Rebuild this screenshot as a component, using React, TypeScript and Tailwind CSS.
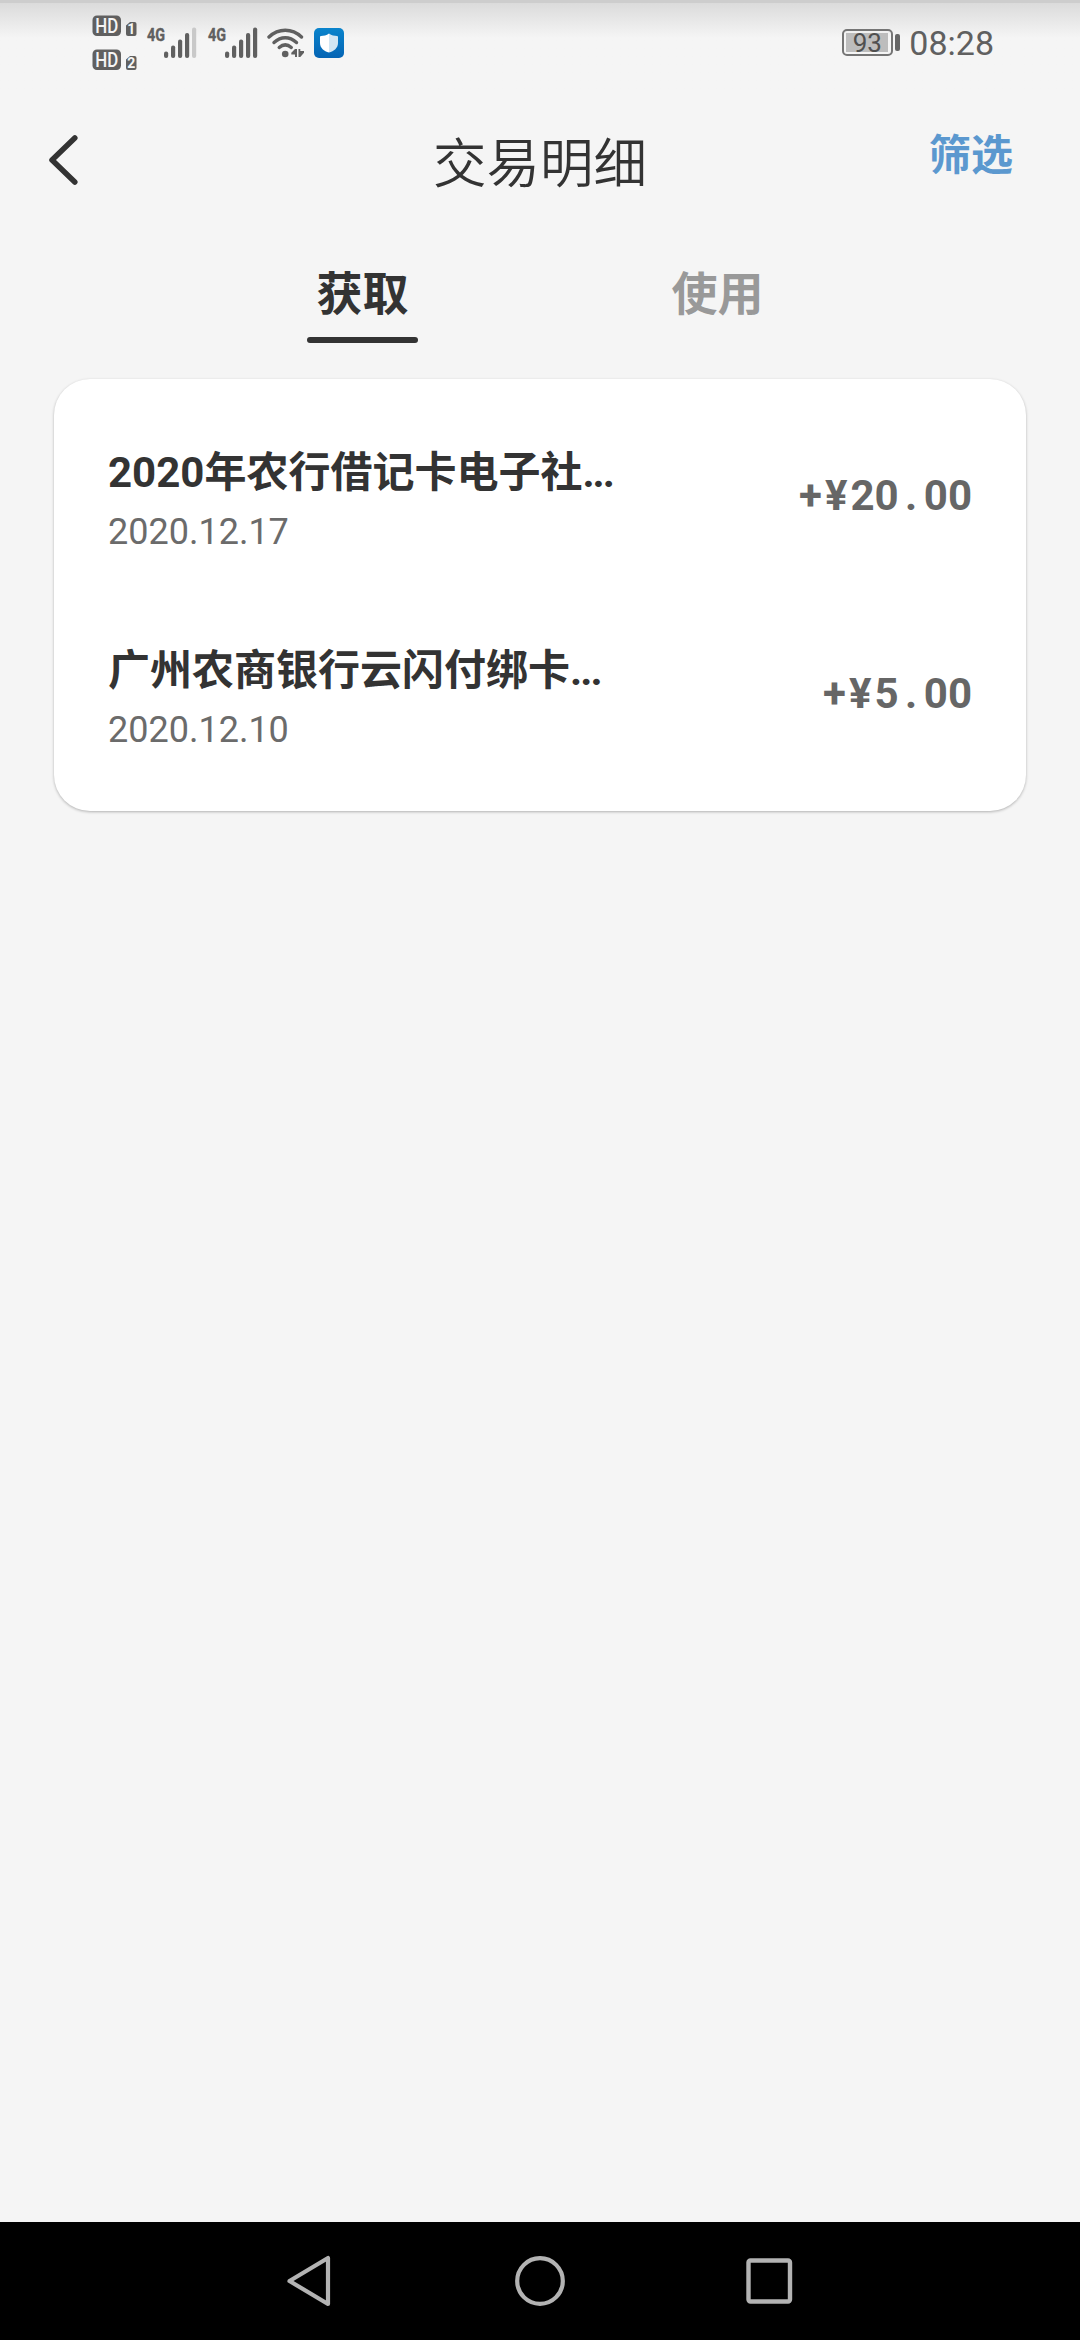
interface Transaction {
  id: string
  title: string
  date: string
  whole: string
  cents: string
}

const TRANSACTIONS: Transaction[] = [
  { id: "1", title: "2020年农行借记卡电子社", date: "2020.12.17", whole: "20", cents: "00" },
  { id: "2", title: "广州农商银行云闪付绑卡", date: "2020.12.10", whole: "5", cents: "00" },
]

function HdBadge({ sim }: { sim: string }) {
  return (
    <svg width="46" height="22" viewBox="0 0 46 22" className="block">
      <rect x="0.5" y="0.5" width="28.5" height="20.5" rx="4.5" fill="#606060" />
      <text x="3.2" y="17.8" fontSize="19.5" fontWeight="500" fill="#f5f5f5" textLength="23" lengthAdjust="spacingAndGlyphs">HD</text>
      <path d="M38 7h4.5a2 2 0 0 1 2 2v10a2 2 0 0 1-2 2H36a2 2 0 0 1-2-2V10.500z" fill="#606060" />
      <text x="39.200" y="19.200" textAnchor="middle" fontSize="14" fontWeight="700" fill="#f5f5f5">{sim}</text>
    </svg>
  )
}

function Signal({ level }: { level: number }) {
  const bars = [
    { x: 17, y: 24 },
    { x: 24, y: 18 },
    { x: 31, y: 12 },
    { x: 38, y: 5.5 },
    { x: 45, y: 0 },
  ]
  return (
    <svg width="50" height="31" viewBox="0 0 50 31" className="block overflow-visible">
      <text x="0" y="13.800" fontSize="19" fontWeight="700" fill="#606060" stroke="#606060" strokeWidth="0.400" textLength="18" lengthAdjust="spacingAndGlyphs">4G</text>
      {bars.map((b, i) => (
        <rect key={b.x} x={b.x} y={b.y + 0.5} width="4.200" height={30.5 - b.y} rx="2" fill={i < level ? "#606060" : "#c9c9c9"} />
      ))}
    </svg>
  )
}

function Wifi() {
  return (
    <svg width="38" height="31" viewBox="0 0 38 31" fill="none" stroke="#606060" strokeWidth="3.400" strokeLinecap="round" className="block">
      <path d="M2 10C11.500 1 25 1 34.500 10" />
      <path d="M7 15.500C14 9.200 22.500 9.200 29.500 15.500" />
      <path d="M12.200 20.500C16 17.200 20.500 17.200 24.300 20.500" />
      <circle cx="18.200" cy="27" r="3.300" fill="#606060" stroke="none" />
      <path d="M30 22v8h-2v-2.500h-3.700v-1.700l3.700-3.800zM31.500 22h1.800v2h3.700v1.700l-3.700 4.300h-1.800z" fill="#606060" stroke="none" />
    </svg>
  )
}

function Shield() {
  return (
    <svg width="30" height="30" viewBox="0 0 30 30" className="block">
      <defs>
        <linearGradient id="shieldBg" x1="0" y1="0" x2="0" y2="1">
          <stop offset="0" stopColor="#0a84cc" />
          <stop offset="1" stopColor="#0564b4" />
        </linearGradient>
      </defs>
      <rect width="30" height="30" rx="5" fill="url(#shieldBg)" />
      <path d="M15 5.500C12.500 7.300 9.500 8 7 8q-1 0-1 1v6c0 5 4 8.200 9 9.600z" fill="#fff" />
      <path d="M15 5.500c2.500 1.800 5.500 2.500 8 2.500q1 0 1 1v6c0 5-4 8.200-9 9.600z" fill="#d3e6f3" />
    </svg>
  )
}

function StatusBar() {
  return (
    <div className="h-[90px] shrink-0 border-t-[3px] border-[#cdcdcd] bg-linear-to-b from-[#dbdbdb] to-[#f5f5f5] to-[35px] pl-[92px] pr-[86px] flex items-start justify-between">
      <div className="flex items-start">
        <div className="flex flex-col gap-[12px] pt-[12px]">
          <HdBadge sim="1" />
          <HdBadge sim="2" />
        </div>
        <div className="flex items-start pt-[24px]">
          <div className="ml-[9px]"><Signal level={4} /></div>
          <div className="ml-[11px]"><Signal level={5} /></div>
          <div className="ml-[9px]"><Wifi /></div>
          <div className="ml-[9px] mt-px"><Shield /></div>
        </div>
      </div>
      <div className="flex items-start pt-[25px]">
        <div className="mt-px w-[51px] h-[27px] rounded-[5px] border-2 border-[#757575] p-[2px]">
          <div className="h-full w-[42px] bg-[#bdbdbd] flex items-center justify-center text-[26px] leading-none text-[#505050]">93</div>
        </div>
        <div className="ml-[2px] mt-[6px] w-[5px] h-[17px] rounded-[2px] bg-[#666666]" />
        <span className="ml-[9px] -mt-[5px] text-[34px] leading-[40px] text-[#606060]">08:28</span>
      </div>
    </div>
  )
}

function Header() {
  return (
    <header className="h-[140px] shrink-0 grid grid-cols-[1fr_auto_1fr] items-start text-[#333333]">
      <button className="ml-[46px] mt-[43px] w-[34px]">
        <svg width="34" height="54" viewBox="0 0 34 54" fill="none" stroke="#333333" strokeWidth="5.500" strokeLinecap="round" strokeLinejoin="round">
          <path d="M28.800 5L6 27l22.800 22" />
        </svg>
      </button>
      <h1 className="mt-[45px] text-[53.5px] leading-[60px] font-[350]">交易明细</h1>
      <button className="justify-self-end mr-[67px] mt-[36px] text-[42px] leading-[60px] font-bold text-[#5b98cf]">筛选</button>
    </header>
  )
}

function Tabs() {
  return (
    <div className="h-[148px] shrink-0 flex text-[46px] leading-[60px] font-bold px-[185px]">
      <div className="flex-1 flex flex-col items-center">
        <span className="mt-[34px] text-[#333333]">获取</span>
        <div className="mt-[13px] w-[111px] h-[6px] rounded-full bg-[#333333]" />
      </div>
      <div className="flex-1 flex flex-col items-center">
        <span className="mt-[34px] text-[#999999]">使用</span>
      </div>
    </div>
  )
}

function TransactionRow({ item }: { item: Transaction }) {
  return (
    <div className="h-[198px] flex items-center justify-between">
      <div className="pt-[12px]">
        <div className="text-[42px] leading-[60px] font-bold text-[#333333]">
          {item.title}<span className="tracking-[-2px]">...</span>
        </div>
        <div className="text-[36px] leading-[58px] text-[#6b6b6b]">{item.date}</div>
      </div>
      <div className="text-[42px] leading-[60px] font-bold text-[#666666]">
        <span className="tracking-[3px]">+¥</span>{item.whole}<span className="px-[6.5px]">.</span>{item.cents}
      </div>
    </div>
  )
}

function NavBar() {
  return (
    <nav className="h-[118px] shrink-0 bg-black flex items-center justify-center gap-[180px]">
      <svg width="50" height="54" viewBox="0 0 50 54" fill="none" stroke="#b3b3b3" strokeWidth="4.200" strokeLinejoin="round">
        <path d="M43 4v46L4.500 27z" />
      </svg>
      <svg width="50" height="50" viewBox="0 0 50 50" fill="none" stroke="#b3b3b3" strokeWidth="4.200">
        <circle cx="25" cy="25" r="22.800" />
      </svg>
      <svg width="50" height="50" viewBox="0 0 50 50" fill="none" stroke="#b3b3b3" strokeWidth="4.400">
        <rect x="3.500" y="4.500" width="41.500" height="41" rx="2" />
      </svg>
    </nav>
  )
}

export default function App() {
  return (
    <div className="w-[1080px] h-[2340px] overflow-hidden flex flex-col bg-[#f5f5f5] font-[Roboto,'Noto_Sans_CJK_SC',sans-serif]">
      <StatusBar />
      <Header />
      <Tabs />
      <main className="flex-1">
        <div className="mx-[54px] mt-px h-[432px] rounded-[36px] bg-white px-[54px] pt-[18px] shadow-[0_1px_3px_rgba(0,0,0,0.28)]">
          {TRANSACTIONS.map((item) => (
            <TransactionRow key={item.id} item={item} />
          ))}
        </div>
      </main>
      <NavBar />
    </div>
  )
}
